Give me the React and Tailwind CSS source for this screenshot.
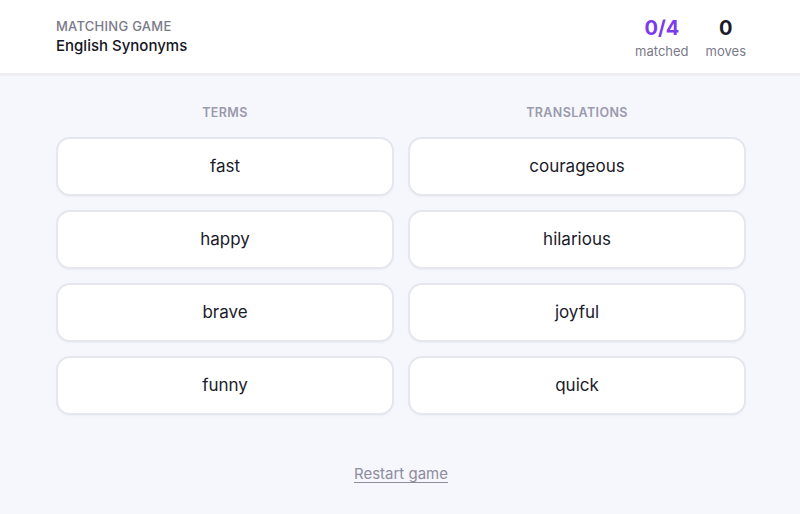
import { useState } from 'react';

const terms = ['fast', 'happy', 'brave', 'funny'];
const translations = ['courageous', 'hilarious', 'joyful', 'quick'];

function WordCard({ word }) {
  return (
    <button className="h-[59px] w-full rounded-[14px] border-2 border-[#e6e6ee] bg-white text-[17px] text-[#1b1b2a] shadow-[0_1px_2px_rgba(0,0,0,0.04)]">
      {word}
    </button>
  );
}

export default function App() {
  const [moves] = useState(0);

  return (
    <div
      className="min-h-[514px] bg-[#f6f6fd]"
      style={{ fontFamily: 'Inter, "Noto Sans", sans-serif' }}
    >
      {/* Header */}
      <div className="flex h-[76px] items-center justify-between border-b-[3px] border-[#ededf2] bg-white pl-14 pr-[54px] pt-1">
        <div className="mb-[5px]">
          <div className="text-[13px] font-medium uppercase leading-[18px] tracking-[0.02em] text-[#7a7a88]">
            Matching Game
          </div>
          <div className="mt-[1px] text-[15px] font-medium leading-[20px] text-[#15151f]">English Synonyms</div>
        </div>
        <div className="flex items-center gap-[17px]">
          <div className="flex flex-col items-center">
            <span className="text-[20px] font-bold leading-[27px] text-[#7c3aed]">0/4</span>
            <span className="text-[13px] text-[#7a7a88]">matched</span>
          </div>
          <div className="flex flex-col items-center">
            <span className="text-[20px] font-bold leading-[27px] text-[#1b1b2a]">{moves}</span>
            <span className="text-[13px] text-[#7a7a88]">moves</span>
          </div>
        </div>
      </div>

      {/* Board */}
      <div className="pl-14 pr-[54px] pt-[28px]">
        <div className="grid grid-cols-2 gap-x-[14px]">
          <div className="flex flex-col items-center">
            <div className="mb-[14px] text-[12.5px] font-semibold uppercase tracking-[0.03em] text-[#9a9aab]">
              Terms
            </div>
            <div className="flex w-full flex-col gap-[14px]">
              {terms.map((t) => (
                <WordCard key={t} word={t} />
              ))}
            </div>
          </div>
          <div className="flex flex-col items-center">
            <div className="mb-[14px] text-[12.5px] font-semibold uppercase tracking-[0.03em] text-[#9a9aab]">
              Translations
            </div>
            <div className="flex w-full flex-col gap-[14px]">
              {translations.map((t) => (
                <WordCard key={t} word={t} />
              ))}
            </div>
          </div>
        </div>

        <div className="mt-[48px] flex justify-center">
          <button className="text-[15px] text-[#8d8d9c] underline underline-offset-[3px]">
            Restart game
          </button>
        </div>
      </div>
    </div>
  );
}
